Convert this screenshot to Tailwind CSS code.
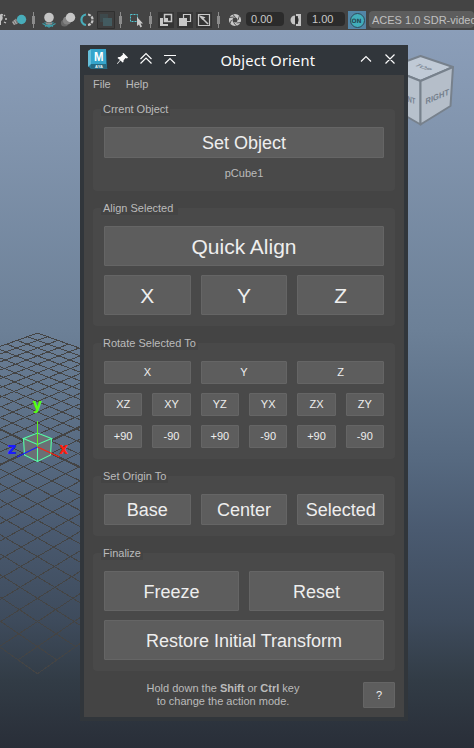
<!DOCTYPE html>
<html lang="en">
<head>
<meta charset="utf-8">
<title>Object Orient</title>
<script src="https://cdn.jsdelivr.net/npm/@tailwindcss/browser@4"></script>
</head>
<body class="relative w-[474px] h-[748px] overflow-hidden bg-[linear-gradient(to_bottom,#8b9eb9_30px,#8295ae_130px,#6c8097_330px,#566980_460px,#4a5a70_530px,#3e4b5c_620px,#323c46_680px,#292e38_748px)] font-['Liberation_Sans',Arial,sans-serif] text-[11px] text-[#bbbbbb]">

<!-- viewport -->
<svg class="absolute inset-0" width="474" height="748" viewBox="0 0 474 748">
  <g id="grid" stroke="#444444" stroke-width="1" shape-rendering="crispEdges"></g>
  <path d="M24 438.500L37.500 433L51.500 437.500V456L37.500 461.500L24 455Z" fill="#6b7075"/>
  <g fill="none" stroke="#55ffa5" stroke-width="1.100">
    <path d="M23.500 438.500L37.500 433L51.500 438.500L37.500 444.500ZM23.500 438.500L24.500 455L37.500 461.500L50.500 455L51.500 438.500"/>
    <path d="M37.500 444V462"/>
  </g>
  <path d="M37.500 421V447" stroke="#5df31f" stroke-width="1"/>
  <path d="M37.500 447L17 457" stroke="#1a1aff" stroke-width="1.200"/>
  <path d="M37.500 447L59.500 457" stroke="#ff2010" stroke-width="1.200"/>
  <g font-family="DejaVu Sans, sans-serif" font-weight="bold" font-size="15.500">
    <text x="32.500" y="410" fill="#55ff11" textLength="9.500" lengthAdjust="spacingAndGlyphs">y</text>
    <text x="59" y="454" fill="#ff2010" textLength="9" lengthAdjust="spacingAndGlyphs">x</text>
    <text x="7.500" y="454" fill="#1a1aff" textLength="9" lengthAdjust="spacingAndGlyphs">z</text>
  </g>
  <!-- view cube -->
  <g stroke="#77818c" stroke-width="2" stroke-linejoin="round">
    <path d="M388 68L420.500 56L453 67L420.500 81Z" fill="#c0cad6"/>
    <path d="M388 68L420.500 81V124.500L392 108Z" fill="#b7c1cc"/>
    <path d="M420.500 81L453 67L450.500 106L420.500 124.500Z" fill="#b5bec9"/>
  </g>
  <g font-family="Liberation Sans, Arial, sans-serif" font-weight="bold" fill="#747e8c">
    <text transform="matrix(1 -.42 0 1 425.500 104.500)" font-size="8.500" textLength="23.500" lengthAdjust="spacingAndGlyphs">RIGHT</text>
    <text transform="matrix(1 .35 0 1 395 97)" font-size="8.500" textLength="20.500" lengthAdjust="spacingAndGlyphs">FRONT</text>
    <text transform="matrix(1 .38 -1 .35 414 65.500)" font-size="7" opacity=".85">TOP</text>
  </g>
</svg>

<!-- toolbar -->
<header class="relative h-[30px] bg-[#444444] flex">
  <svg width="246" height="30" viewBox="0 0 246 30" class="shrink-0">
    <path d="M0 14C4 16 3 20 1 21V25H0Z" fill="#c4c4c4"/>
    <path d="M1 14.500L3 15M4 16L5 15M5 19H7M4 22L6 23" stroke="#c4c4c4" stroke-width="1.300"/>
    <circle cx="21.500" cy="19.500" r="4.700" fill="#48adba"/>
    <path d="M12 22L16 18.500L18 23.500L14 25Z" fill="#a8a8a8"/><path d="M13.500 21L16 25M15.500 19.500L17.500 24" stroke="#555" stroke-width=".7"/>
    <g fill="#8c8c8c">
      <path d="M33 12h1v16h-1zM32 16h3v8h-3zM120 12h1v16h-1zM119 16h3v8h-3zM150 12h1v16h-1zM149 16h3v8h-3zM218 12h1v16h-1zM217 16h3v8h-3z"/>
    </g>
    <path d="M42.500 23.500L49 27L55.500 23.500M44.500 22.500L53 26.500M53.500 22.500L45 26.500" fill="none" stroke="#3f9eaa" stroke-width="1.200"/>
    <circle cx="49" cy="17.500" r="4.800" fill="#c4c4c4"/><path d="M46 22.500h6v2h-6z" fill="#929292"/>
    <circle cx="64.500" cy="23" r="3.600" fill="#686868"/><circle cx="67" cy="20.500" r="4" fill="#848484"/><circle cx="70.500" cy="17.500" r="4.700" fill="#c6c6c6"/>
    <path d="M86 14.500A5.300 5.300 0 0 0 86 25" fill="none" stroke="#48adba" stroke-width="2.200"/>
    <path d="M88 14.500A5.300 5.300 0 0 1 88 25" fill="none" stroke="#c4c4c4" stroke-width="2.200" stroke-dasharray="3 1"/>
    <path d="M97.500 11.500h17v17h-17z" fill="#3e3e3e" stroke="#303030"/>
    <path d="M100 14h8v8h-8z" fill="#3d494c"/><path d="M103 18h9v8h-9z" fill="#435b60"/>
    <path d="M130.500 14.500h7v7h-7z" fill="none" stroke="#50c6d2" stroke-dasharray="2 1"/>
    <path d="M137 17V26L139 24.500L140.500 27.500L142 26.500L140.500 23.500H143Z" fill="#c8c8c8"/>
    <path d="M158 12h16v16h-16zM177 12h16v16h-16zM196 12h16v16h-16z" fill="#353535"/>
    <path d="M164.500 14.500h7v7h-7z" fill="none" stroke="#c8c8c8" stroke-width="1.500"/>
    <path d="M160 18h3v6h5v2h-8zM165 18h3v3h-3z" fill="#c8c8c8"/>
    <path d="M183.500 14.500h7v7h-7z" fill="none" stroke="#c8c8c8" stroke-width="1.200"/><path d="M179 18h8v8h-8z" fill="#c8c8c8"/>
    <path d="M198.500 14.500h11v11h-11z" fill="none" stroke="#c8c8c8" stroke-width="1.200"/><path d="M200.500 16.500l3.500 1-1.500 1.500ZM202.500 18.500L208 24" stroke="#c8c8c8" stroke-width="1.500" fill="#c8c8c8"/>
    <circle cx="235" cy="20" r="4.300" fill="none" stroke="#c8c8c8" stroke-width="3.600"/>
    <path d="M232.500 14l3 3.500M239.500 15.500l-1.500 4.500M241 22.500l-4.500 .5M236.500 26l-3-3.500M229.500 24.500l2-4.500M229 17.500l5-.5" stroke="#444" stroke-width=".9"/>
  </svg>
  <div class="mt-3 h-[14px] w-[38px] shrink-0 rounded-sm bg-[#2b2b2b] pl-[5px] text-[11px] leading-[15px] text-[#c8c8c8]">0.00</div>
  <svg width="23" height="30" viewBox="0 0 23 30" class="shrink-0"><path d="M12 14h5v12h-5v-2h2v-8h-2Z" fill="#c4c4c4"/><path d="M11 15.500a4.500 4.500 0 0 0 0 9Z" fill="#c4c4c4"/><path d="M11 16.500a3.500 3.500 0 0 1 0 7Z" fill="#2f2f2f"/></svg>
  <div class="mt-3 h-[14px] w-[38px] shrink-0 rounded-sm bg-[#2b2b2b] pl-[5px] text-[11px] leading-[15px] text-[#c8c8c8]">1.00</div>
  <div class="mt-[11px] ml-[3px] flex h-[18px] w-[18px] shrink-0 items-center justify-center bg-[#5285a6]">
    <div class="h-[15px] w-[15px] rounded-full border border-[#2e4a58] bg-[#42aebb] text-center font-['DejaVu_Sans',sans-serif] text-[6px] font-bold leading-[13px] text-[#254954]"><span class="-ml-px">ON</span></div>
  </div>
  <div class="mt-[11px] ml-[3px] h-[17px] w-[105px] shrink-0 whitespace-nowrap rounded-sm bg-[#5d5d5d] pl-[3px] text-[11px] leading-[18px] text-[#c0c0c0]">ACES 1.0 SDR-video</div>
</header>

<!-- dialog -->
<main class="absolute left-[80px] top-[45px] flex h-[676px] w-[328px] flex-col bg-[#31363b] px-1 pb-1">
  <div class="relative h-[30px] shrink-0">
    <svg class="block" width="320" height="30" viewBox="84 45 320 30">
      <path d="M88 51L91 49H106L107 66V69H91L88 66Z" fill="#247a9b"/>
      <path d="M91 49H106V64H91Z" fill="#36a5cb"/><path d="M88 51L91 49V64L88 67Z" fill="#66bfda"/><path d="M91 64H106L107.500 69H91Z" fill="#276a82"/>
      <text x="94" y="60.500" font-size="12" font-weight="bold" font-family="Liberation Sans, sans-serif" fill="#fff" textLength="9.500" lengthAdjust="spacingAndGlyphs">M</text>
      <text x="95" y="67.500" font-size="4" font-weight="bold" font-family="Liberation Sans, sans-serif" fill="#e5f3f7" textLength="8">AYA</text>
      <path d="M123.500 53L128 57.500L127 58.500L125.500 58L123.500 60.500V62L122.500 62.500L120.500 60.500L117.500 64L117 63.500L120 60L117.500 58L118.500 57H120L123 54.500L122.500 53.500Z" fill="#fcfcfc"/>
      <path d="M140.500 59L146 53.500L151.500 59M140.500 63.500L146 58L151.500 63.500M164 55.500H176M165 63.500L170 58.500L175 63.500M361 61.500L366 56.500L371 61.500M385.500 54.500L394.500 63.500M394.500 54.500L385.500 63.500" fill="none" stroke="#fcfcfc" stroke-width="1.150"/>
      <text x="220.500" y="66" font-family="Noto Sans, sans-serif" font-size="14.670" fill="#fcfcfc" textLength="94.500">Object Orient</text>
    </svg>
  </div>
  <div class="flex flex-1 flex-col bg-[#444444]">
    <nav class="flex h-[34px] gap-[15px] pl-[9px] pt-[3px] leading-[13px]"><span>File</span><span>Help</span></nav>
    <div class="flex flex-col gap-[17px] pl-[9px] pr-[9px]">

      <section class="relative h-[82px] rounded-sm bg-[#494949] px-[11px] pt-[18px]">
        <h2 class="absolute left-2 top-[-7px] h-[14px] bg-[#444444] px-[2px] leading-[14px]">Crrent Object</h2>
        <button class="block h-[31px] w-full rounded-[1px] border border-[#656565] bg-[#5d5d5d] text-[18px] leading-[30px] text-[#eeeeee]">Set Object</button>
        <p class="mt-[9px] text-center leading-[13px]">pCube1</p>
      </section>

      <section class="relative h-[118px] rounded-sm bg-[#494949] px-[11px] pt-[18px] text-[21px] leading-[39px] text-[#eeeeee]">
        <h2 class="absolute left-2 top-[-7px] h-[14px] bg-[#444444] pl-[2px] pr-[5px] text-[11px] leading-[14px] text-[#bbbbbb]">Align Selected</h2>
        <button class="block h-10 w-full rounded-[1px] border border-[#656565] bg-[#5d5d5d]">Quick Align</button>
        <div class="mt-[9px] grid grid-cols-3 gap-[10px]">
          <button class="h-10 rounded-[1px] border border-[#656565] bg-[#5d5d5d]">X</button>
          <button class="h-10 rounded-[1px] border border-[#656565] bg-[#5d5d5d]">Y</button>
          <button class="h-10 rounded-[1px] border border-[#656565] bg-[#5d5d5d]">Z</button>
        </div>
      </section>

      <section class="relative h-[116px] rounded-sm bg-[#494949] px-[11px] pt-[18px] text-[#eeeeee]">
        <h2 class="absolute left-2 top-[-7px] h-[14px] bg-[#444444] px-[2px] leading-[14px] text-[#bbbbbb]">Rotate Selected To</h2>
        <div class="grid grid-cols-6 gap-x-[10px] gap-y-[9px] leading-[21px]">
          <button class="col-span-2 h-[23px] rounded-[1px] border border-[#656565] bg-[#5d5d5d]">X</button>
          <button class="col-span-2 h-[23px] rounded-[1px] border border-[#656565] bg-[#5d5d5d]">Y</button>
          <button class="col-span-2 h-[23px] rounded-[1px] border border-[#656565] bg-[#5d5d5d]">Z</button>
          <button class="h-[23px] rounded-[1px] border border-[#656565] bg-[#5d5d5d]">XZ</button>
          <button class="h-[23px] rounded-[1px] border border-[#656565] bg-[#5d5d5d]">XY</button>
          <button class="h-[23px] rounded-[1px] border border-[#656565] bg-[#5d5d5d]">YZ</button>
          <button class="h-[23px] rounded-[1px] border border-[#656565] bg-[#5d5d5d]">YX</button>
          <button class="h-[23px] rounded-[1px] border border-[#656565] bg-[#5d5d5d]">ZX</button>
          <button class="h-[23px] rounded-[1px] border border-[#656565] bg-[#5d5d5d]">ZY</button>
          <button class="h-[23px] rounded-[1px] border border-[#656565] bg-[#5d5d5d]">+90</button>
          <button class="h-[23px] rounded-[1px] border border-[#656565] bg-[#5d5d5d]">-90</button>
          <button class="h-[23px] rounded-[1px] border border-[#656565] bg-[#5d5d5d]">+90</button>
          <button class="h-[23px] rounded-[1px] border border-[#656565] bg-[#5d5d5d]">-90</button>
          <button class="h-[23px] rounded-[1px] border border-[#656565] bg-[#5d5d5d]">+90</button>
          <button class="h-[23px] rounded-[1px] border border-[#656565] bg-[#5d5d5d]">-90</button>
        </div>
      </section>

      <section class="relative h-[60px] rounded-sm bg-[#494949] px-[11px] pt-[18px] text-[18px] leading-[30px] text-[#eeeeee]">
        <h2 class="absolute left-2 top-[-7px] h-[14px] bg-[#444444] px-[2px] text-[11px] leading-[14px] text-[#bbbbbb]">Set Origin To</h2>
        <div class="grid grid-cols-3 gap-[10px]">
          <button class="h-[31px] rounded-[1px] border border-[#656565] bg-[#5d5d5d]">Base</button>
          <button class="h-[31px] rounded-[1px] border border-[#656565] bg-[#5d5d5d]">Center</button>
          <button class="h-[31px] rounded-[1px] border border-[#656565] bg-[#5d5d5d]">Selected</button>
        </div>
      </section>

      <section class="relative h-[118px] rounded-sm bg-[#494949] px-[11px] pt-[18px] text-[18px] leading-[38px] text-[#eeeeee]">
        <h2 class="absolute left-2 top-[-7px] h-[14px] bg-[#444444] px-[2px] text-[11px] leading-[14px] text-[#bbbbbb]">Finalize</h2>
        <div class="grid grid-cols-2 gap-x-[10px] gap-y-[9px]">
          <button class="h-10 rounded-[1px] border border-[#656565] bg-[#5d5d5d] pt-px">Freeze</button>
          <button class="h-10 rounded-[1px] border border-[#656565] bg-[#5d5d5d] pt-px">Reset</button>
          <button class="col-span-2 h-10 rounded-[1px] border border-[#656565] bg-[#5d5d5d] pt-px">Restore Initial Transform</button>
        </div>
      </section>
    </div>

    <footer class="mt-[11px] flex pl-[9px] pr-[9px]">
      <p class="w-[260px] text-center leading-[13px]">Hold down the <b>Shift</b> or <b>Ctrl</b> key<br>to change the action mode.</p>
      <button class="ml-[10px] h-[26px] w-8 rounded-[1px] border border-[#656565] bg-[#5d5d5d] leading-[24px] text-[#eeeeee]">?</button>
    </footer>
  </div>
</main>

<script>
  // Ground plane: 24 x 24 cells in perspective, corner towards the viewer.
  const project = (i, j) => {
    const k = (i + j) / 2, w = 1 - 0.0276 * k;
    return [37.5 + 13.3 * (i - j) / w, (447 + 0.3 * k) / w];
  };
  const grid = document.getElementById('grid');
  const line = (a, b, width) => {
    const el = document.createElementNS('http://www.w3.org/2000/svg', 'line');
    el.setAttribute('x1', a[0]); el.setAttribute('y1', a[1]);
    el.setAttribute('x2', b[0]); el.setAttribute('y2', b[1]);
    el.setAttribute('stroke-width', width);
    grid.appendChild(el);
  };
  for (let n = -12; n <= 12; n++) {
    const width = n === 0 ? 2 : 1;
    line(project(n, -12), project(n, 12), width);
    line(project(-12, n), project(12, n), width);
  }
</script>
</body>
</html>
